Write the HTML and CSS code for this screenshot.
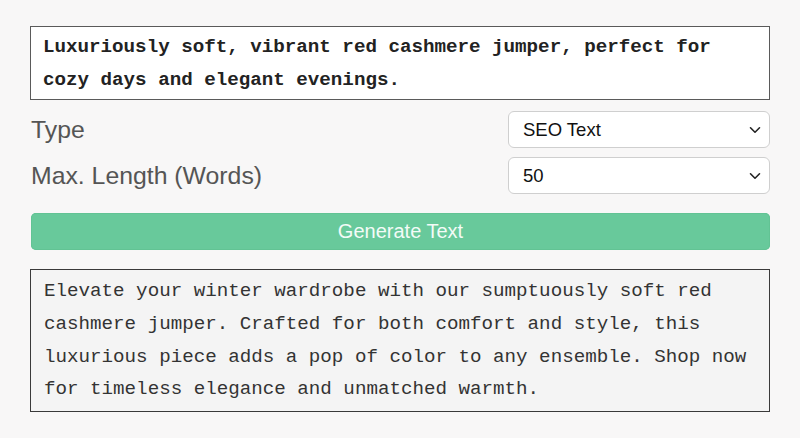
FILE: index.html
```html
<!DOCTYPE html>
<html lang="en">
<head>
<meta charset="utf-8">
<title>Text Generator</title>
<link rel="stylesheet" href="styles.css">
</head>
<body>
<main class="panel">
  <div class="input-box">Luxuriously soft, vibrant red cashmere jumper, perfect for cozy days and elegant evenings.</div>
  <div class="field">
    <label class="field-label">Type</label>
    <div class="select-wrap">
      <select class="select"><option>SEO Text</option></select>
      <svg class="chevron" width="12" height="8" viewBox="0 0 12 8"><path d="M1.5 1.8 L6 6.2 L10.5 1.8" fill="none" stroke="#222" stroke-width="1.6" stroke-linecap="round" stroke-linejoin="round"/></svg>
    </div>
  </div>
  <div class="field">
    <label class="field-label">Max. Length (Words)</label>
    <div class="select-wrap">
      <select class="select"><option>50</option></select>
      <svg class="chevron" width="12" height="8" viewBox="0 0 12 8"><path d="M1.5 1.8 L6 6.2 L10.5 1.8" fill="none" stroke="#222" stroke-width="1.6" stroke-linecap="round" stroke-linejoin="round"/></svg>
    </div>
  </div>
  <button class="generate">Generate Text</button>
  <div class="output-box">Elevate your winter wardrobe with our sumptuously soft red cashmere jumper. Crafted for both comfort and style, this luxurious piece adds a pop of color to any ensemble. Shop now for timeless elegance and unmatched warmth.</div>
</main>
</body>
</html>
```

FILE: styles.css
```css
html, body {
  margin: 0;
  padding: 0;
  background: #f8f7f7;
}

.panel {
  width: 740px;
  margin-left: 30px;
  padding-top: 26px;
  display: flex;
  flex-direction: column;
}

.input-box {
  background: #ffffff;
  border: 1px solid #5a5a5a;
  padding: 4px 12px 3px;
  font-family: "Liberation Mono", "Courier New", monospace;
  font-weight: bold;
  font-size: 19.2px;
  line-height: 1.7;
  color: #222;
}

.field {
  display: flex;
  align-items: center;
  justify-content: space-between;
  margin-top: 11px;
}

.field + .field {
  margin-top: 9px;
}

.field-label {
  font-family: "Liberation Sans", Arial, sans-serif;
  font-size: 24.8px;
  color: #555555;
  padding-left: 1px;
}

.select-wrap {
  position: relative;
  width: 262px;
}

.select {
  appearance: none;
  -webkit-appearance: none;
  display: block;
  width: 262px;
  height: 37px;
  margin: 0;
  box-sizing: border-box;
  background: #ffffff;
  border: 1px solid #cfcfcf;
  border-radius: 6px;
  padding: 0 0 0 14px;
  font-family: "Liberation Sans", Arial, sans-serif;
  font-size: 18.5px;
  color: #111;
  outline: none;
}

.chevron {
  position: absolute;
  right: 9px;
  top: 15px;
  pointer-events: none;
}

.generate {
  margin: 19px 0 0 1px;
  height: 37px;
  border: none;
  border-radius: 5px;
  background: #68c99b;
  color: #f3fbf7;
  font-family: "Liberation Sans", Arial, sans-serif;
  font-size: 20px;
  box-shadow: 0 0 0 1px #62c394 inset;
}

.output-box {
  margin-top: 19px;
  background: #f4f4f4;
  border: 1px solid #3a3a3a;
  padding: 5px 12px 5px 13px;
  font-family: "Liberation Mono", "Courier New", monospace;
  font-size: 19.2px;
  line-height: 1.7;
  color: #333;
}
```
